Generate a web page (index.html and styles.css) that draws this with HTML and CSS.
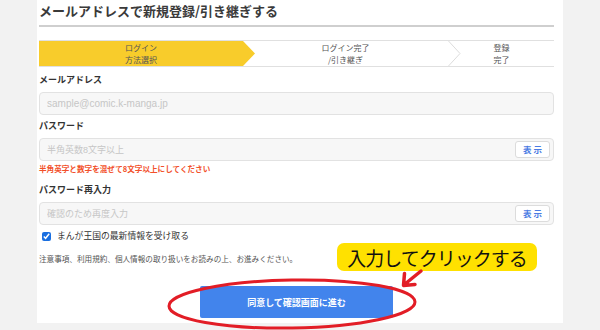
FILE: index.html
```html
<!DOCTYPE html>
<html lang="ja">
<head>
<meta charset="utf-8">
<title>メールアドレスで新規登録/引き継ぎする</title>
<link rel="stylesheet" href="styles.css">
</head>
<body>
<main class="panel">
  <h1 class="title">メールアドレスで新規登録/引き継ぎする</h1>

  <div class="stepper">
    <div class="step step-current"><span>ログイン<br>方法選択</span></div>
    <div class="step step-mid"><span>ログイン完了<br>/引き継ぎ</span></div>
    <svg class="chev" width="13" height="25" viewBox="0 0 13 25"><polyline points="0.5,0 12,12.5 0.5,25" fill="none" stroke="#dcdcdc" stroke-width="1"/></svg>
    <div class="step step-last"><span>登録<br>完了</span></div>
  </div>

  <form class="form">
    <label class="label">メールアドレス</label>
    <div class="field"><input class="input input-mail" type="text" placeholder="sample@comic.k-manga.jp"></div>

    <label class="label label-gap">パスワード</label>
    <div class="field"><input class="input" type="password" placeholder="半角英数8文字以上"><button type="button" class="show">表 示</button></div>
    <p class="error">半角英字と数字を混ぜて8文字以上にしてください</p>

    <label class="label label-gap2">パスワード再入力</label>
    <div class="field"><input class="input" type="password" placeholder="確認のため再度入力"><button type="button" class="show">表 示</button></div>

    <label class="check"><input type="checkbox" checked><span>まんが王国の最新情報を受け取る</span></label>

    <p class="notice">注意事項、利用規約、個人情報の取り扱いをお読みの上、お進みください。</p>

    <div class="actions"><button type="button" class="submit">同意して確認画面に進む</button></div>
  </form>
</main>

<div class="callout">入力してクリックする</div>
<svg class="marks" width="600" height="330" viewBox="0 0 600 330">
  <ellipse cx="292" cy="304" rx="123" ry="24" transform="rotate(-1 292 304)" fill="none" stroke="#e21d26" stroke-width="3"/>
  <path d="M421,271 L405,284 M404.5,273.5 L403.5,285.5 L415,284.5" fill="none" stroke="#e21d26" stroke-width="3.5" stroke-linecap="round" stroke-linejoin="round"/>
</svg>
</body>
</html>
```
FILE: styles.css
```css
* { box-sizing: border-box; }
html, body {
  margin: 0;
  padding: 0;
  height: 330px;
  overflow: hidden;
  background: #f2f2f2;
  font-family: "Noto Sans CJK JP", "Liberation Sans", sans-serif;
  color: #333;
}
.panel {
  position: relative;
  margin-left: 37px;
  width: 526px;
  height: 323px;
  background: #fff;
  padding: 0 9px 0 2px;
}
.title {
  margin: 0;
  padding-top: 2px;
  padding-bottom: 6px;
  font-size: 13px;
  line-height: 17px;
  font-weight: bold;
  color: #3a3a3a;
  border-bottom: 2px solid #cfcfcf;
}
.stepper {
  display: flex;
  height: 27px;
  margin-top: 13px;
  border-top: 1px solid #e0e0e0;
  border-bottom: 1px solid #e0e0e0;
}
.step {
  display: flex;
  align-items: center;
  justify-content: center;
  text-align: center;
  font-size: 8px;
  line-height: 11.6px;
  color: #555;
}
.step-current {
  flex: 0 0 216px;
  background: #f8cc2b;
  padding-right: 12px;
  clip-path: polygon(0 0, 204px 0, 100% 50%, 204px 100%, 0 100%);
}
.step-mid { flex: 0 0 193px; padding-right: 12px; }
.chev { flex: 0 0 13px; display: block; }
.step-last { flex: 1; padding-right: 12px; }

.form { display: flex; flex-direction: column; margin: 0; }
.label {
  margin-top: 7px;
  font-size: 9px;
  line-height: 12px;
  font-weight: bold;
  color: #333;
}
.label-gap { margin-top: 5px; }
.label-gap2 { margin-top: 10px; }
.field {
  display: flex;
  align-items: center;
  height: 23px;
  margin-top: 6px;
  background: #f7f7f7;
  border: 1px solid #e2e2e2;
  border-radius: 4px;
  padding: 0 3px 0 0;
}
.input {
  flex: 1;
  min-width: 0;
  height: 100%;
  border: 0;
  outline: 0;
  background: transparent;
  padding: 0 0 0 7px;
  font-family: "Liberation Sans", "Noto Sans CJK JP", sans-serif;
  font-size: 9px;
  color: #333;
}
.input-mail { font-size: 10px; }
.input::placeholder { color: #c6c6c6; }
.show {
  width: 35px;
  height: 17px;
  padding: 0;
  background: #fff;
  border: 1px solid #dcdcdc;
  border-radius: 3px;
  font-family: "Noto Sans CJK JP", sans-serif;
  font-size: 8.5px;
  font-weight: bold;
  color: #4a7be3;
  line-height: 15px;
}
.error {
  margin: 3px 0 0;
  font-size: 7.6px;
  line-height: 10px;
  font-weight: bold;
  color: #f2502a;
}
.check {
  display: flex;
  align-items: center;
  margin-top: 5px;
  font-size: 8.8px;
  line-height: 12px;
  color: #333;
}
.check input {
  width: 9px;
  height: 9px;
  margin: 0 6px 0 3px;
  accent-color: #1a6fe0;
}
.notice {
  margin: 12px 0 0;
  font-size: 7.6px;
  line-height: 10px;
  color: #555;
}
.actions { display: flex; justify-content: center; margin-top: 22px; }
.submit {
  width: 193px;
  height: 32px;
  border: 0;
  border-radius: 2px;
  background: #4284ec;
  color: #fff;
  font-family: "Noto Sans CJK JP", sans-serif;
  font-size: 9px;
  font-weight: bold;
}
.callout {
  position: absolute;
  left: 337px;
  top: 243px;
  width: 200px;
  height: 28px;
  background: #ffe100;
  border-radius: 7px;
  display: flex;
  align-items: center;
  justify-content: center;
  font-size: 19px;
  letter-spacing: -1px;
  color: #111;
  line-height: 1;
}
.marks {
  position: absolute;
  left: 0;
  top: 0;
  pointer-events: none;
}
```
